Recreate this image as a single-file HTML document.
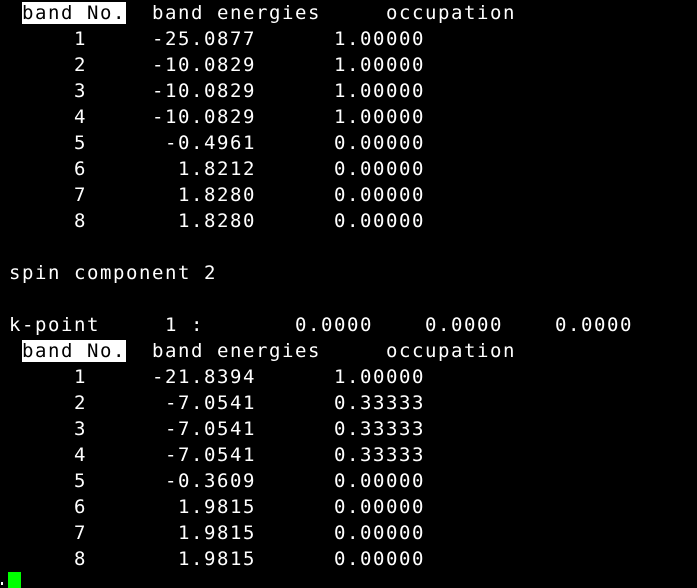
<!DOCTYPE html>
<html><head><style>
html,body{margin:0;padding:0;background:#000;width:697px;height:588px;overflow:hidden}
pre{margin:0;position:absolute;left:9px;top:0;font-family:"DejaVu Sans Mono","Liberation Mono",monospace;font-size:19px;letter-spacing:1.56px;line-height:26px;color:#fff}
.h{background:#fff;color:#000}
#cur{position:absolute;left:8px;top:572px;width:13px;height:16px;background:#00ff00}
#dot{position:absolute;left:1px;top:582px;width:2px;height:3px;background:#fff}
</style></head><body>
<pre> <span class="h">band No.</span>  band energies     occupation
     1     -25.0877      1.00000
     2     -10.0829      1.00000
     3     -10.0829      1.00000
     4     -10.0829      1.00000
     5      -0.4961      0.00000
     6       1.8212      0.00000
     7       1.8280      0.00000
     8       1.8280      0.00000

spin component 2

k-point     1 :       0.0000    0.0000    0.0000
 <span class="h">band No.</span>  band energies     occupation
     1     -21.8394      1.00000
     2      -7.0541      0.33333
     3      -7.0541      0.33333
     4      -7.0541      0.33333
     5      -0.3609      0.00000
     6       1.9815      0.00000
     7       1.9815      0.00000
     8       1.9815      0.00000
</pre>
<div id="dot"></div><div id="cur"></div>
</body></html>
